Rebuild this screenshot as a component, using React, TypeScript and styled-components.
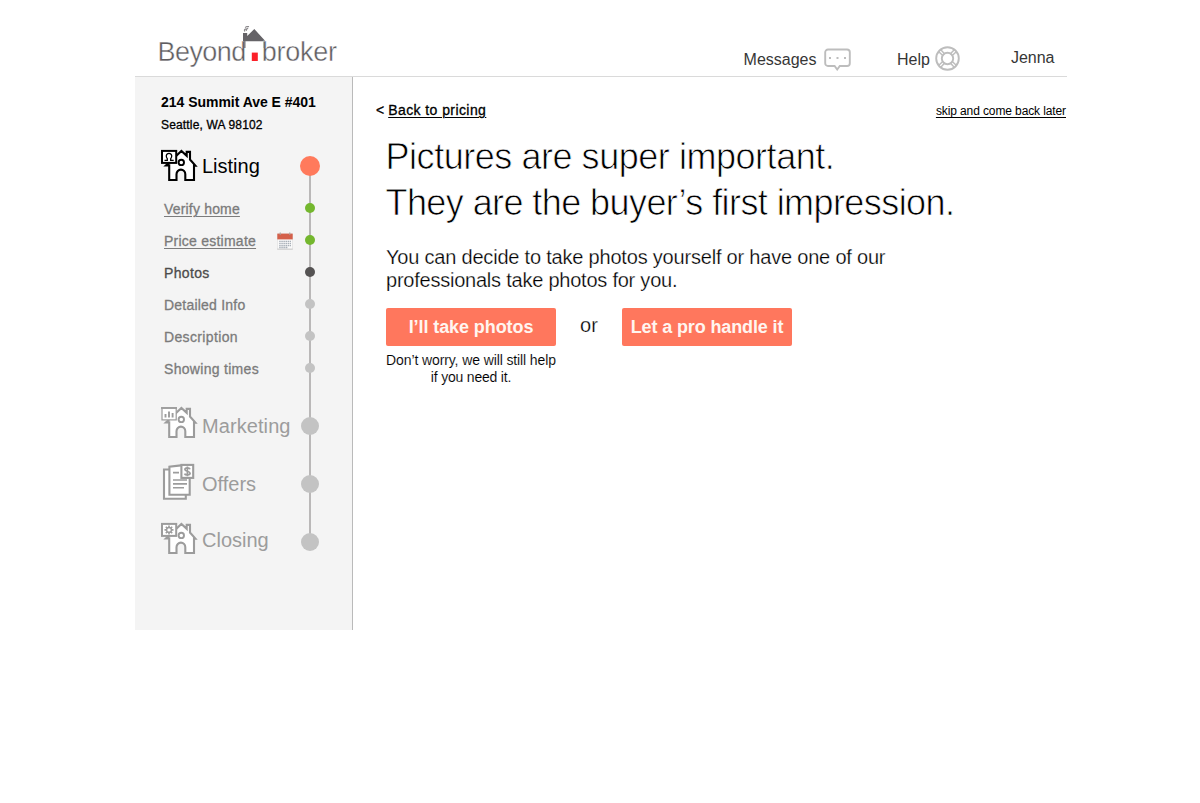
import React from "react";
import styled, { createGlobalStyle } from "styled-components";

const GlobalStyle = createGlobalStyle`
  body {
    margin: 0;
    background: #fff;
    color: #000;
    font-family: "Liberation Sans", Arial, Helvetica, sans-serif;
  }
  svg { display: block; flex: none; }
`;

const Page = styled.div`
  width: 932px;
  margin-left: 135px;
`;

const Header = styled.header`
  display: flex;
  align-items: flex-start;
  height: 76px;
  border-bottom: 1px solid #dadada;
`;

const Logo = styled.a`
  display: flex;
  align-items: flex-start;
  padding: 26px 0 0 22.5px;
  width: 180px;
  color: #5f5d61;
`;

const LogoWord = styled.span<{ $width: number; $spacing: number }>`
  width: ${(p) => p.$width}px;
  margin-top: 11px;
  font-size: 27px;
  line-height: 31px;
  letter-spacing: ${(p) => p.$spacing}px;
  white-space: nowrap;
  -webkit-text-stroke: 0.4px #fff;
`;

const LogoMark = styled.svg`
  margin: 0 -5px 0 -3px;
`;

const HeaderNav = styled.nav`
  display: flex;
  align-items: flex-start;
  margin-left: auto;
  padding-right: 12.5px;
`;

const HeaderLink = styled.a<{ $top: number; $gap?: number }>`
  display: flex;
  align-items: flex-start;
  gap: ${(p) => p.$gap ?? 0}px;
  padding-top: ${(p) => p.$top}px;
  font-size: 16px;
  line-height: 18px;
  color: #363636;
  white-space: nowrap;
  & + & { margin-left: 46.5px; }
  &:last-child { margin-left: 51px; }
`;

const HeaderIcon = styled.svg<{ $lift: number }>`
  margin-top: -${(p) => p.$lift}px;
  fill: none;
  stroke: #bdbdbd;
  stroke-width: 1.9;
`;

const Body = styled.div`
  display: flex;
`;

const Sidebar = styled.aside`
  box-sizing: border-box;
  width: 218px;
  height: 553px;
  padding: 16px 0 0 26px;
  background: #f4f4f4;
  border-right: 1px solid #bababa;
`;

const Street = styled.div`
  font-size: 14px;
  font-weight: 700;
  line-height: 18px;
  letter-spacing: -0.03px;
  white-space: nowrap;
`;

const City = styled.div`
  margin-top: 6px;
  font-size: 12px;
  line-height: 16px;
  letter-spacing: 0.16px;
  -webkit-text-stroke: 0.3px #000;
`;

const Steps = styled.nav`
  position: relative;
  margin-top: 7px;
  &::before {
    content: "";
    position: absolute;
    left: 148px;
    top: 26px;
    bottom: 29px;
    width: 2px;
    background: #bab8b8;
  }
`;

const Stage = styled.div<{ $height: number; $active?: boolean }>`
  display: grid;
  grid-template-columns: 139px 20px;
  align-items: center;
  height: ${(p) => p.$height}px;
  color: ${(p) => (p.$active ? "#000" : "#9c9c9c")};
`;

const StageName = styled.div<{ $shift: number }>`
  display: flex;
  align-items: center;
  height: 44px;
  margin-top: ${(p) => p.$shift * 2}px;
  margin-left: -5px;
`;

const StageText = styled.span<{ $spacing: number; $drop: number }>`
  margin-left: -1px;
  padding-top: ${(p) => p.$drop}px;
  font-size: 20px;
  line-height: 24px;
  letter-spacing: ${(p) => p.$spacing}px;
  white-space: nowrap;
`;

const SubSteps = styled.div`
  margin-bottom: 13px;
`;

const SubStep = styled.div`
  display: grid;
  grid-template-columns: 139px 20px;
  align-items: center;
  height: 32px;
`;

const SubName = styled.div`
  display: flex;
  align-items: center;
  justify-content: space-between;
  height: 20px;
  padding: 2px 7.5px 0 3px;
`;

const SubText = styled.a<{ $current?: boolean; $done?: boolean; $spacing: number }>`
  font-size: 14px;
  line-height: 16px;
  letter-spacing: ${(p) => p.$spacing}px;
  white-space: nowrap;
  color: ${(p) => (p.$current ? "#4c4c4c" : "#7b7b7b")};
  -webkit-text-stroke: 0.3px currentColor;
  text-decoration: ${(p) => (p.$done ? "underline" : "none")};
  text-decoration-thickness: 1px;
  text-underline-offset: 2px;
`;

const Dot = styled.span<{ $size: number; $color: string }>`
  position: relative;
  justify-self: center;
  width: ${(p) => p.$size}px;
  height: ${(p) => p.$size}px;
  border-radius: 50%;
  background: ${(p) => p.$color};
`;

const Main = styled.main`
  flex: 1;
  padding: 23px 1px 0 33px;
`;

const TopLinks = styled.div`
  display: flex;
  justify-content: space-between;
  margin-left: -10px;
  line-height: 20px;
`;

const Back = styled.div`
  display: flex;
  gap: 4px;
  font-size: 14px;
  -webkit-text-stroke: 0.3px #000;
`;

const Link = styled.a<{ $light?: boolean }>`
  font-size: ${(p) => (p.$light ? 12 : 14)}px;
  letter-spacing: ${(p) => (p.$light ? -0.11 : 0.42)}px;
  padding-top: ${(p) => (p.$light ? 1 : 0)}px;
  text-decoration: underline;
  text-decoration-thickness: 1px;
  text-underline-offset: 2px;
  text-decoration-skip-ink: ${(p) => (p.$light ? "none" : "auto")};
`;

const Heading = styled.h1`
  margin: 13px 0 0 -0.5px;
  font-size: 36px;
  font-weight: 400;
  line-height: 45.5px;
  -webkit-text-stroke: 0.75px #fff;
`;

const Line = styled.span<{ $spacing: number }>`
  display: block;
  letter-spacing: ${(p) => p.$spacing}px;
  white-space: nowrap;
`;

const Lead = styled.p`
  margin: 21px 0 0;
  font-size: 20px;
  line-height: 23px;
  -webkit-text-stroke: 0.25px #fff;
`;

const Choices = styled.div`
  display: flex;
  align-items: flex-start;
  margin-top: 16px;
`;

const Choice = styled.div`
  width: 170px;
`;

const Button = styled.button<{ $spacing: number }>`
  display: block;
  width: 170px;
  height: 38px;
  padding: 0;
  border: 0;
  border-radius: 2px;
  background: #ff775d;
  color: #fff5f0;
  font: 700 18px/38px "Liberation Sans", Arial, sans-serif;
  letter-spacing: ${(p) => p.$spacing}px;
  white-space: nowrap;
`;

const Or = styled.span`
  width: 66px;
  padding-top: 6px;
  text-align: center;
  font-size: 20px;
  line-height: 23px;
  -webkit-text-stroke: 0.25px #fff;
`;

const Note = styled.p`
  margin: 6px 0 0;
  text-align: center;
  font-size: 14px;
  line-height: 17px;
  -webkit-text-stroke: 0.1px #fff;
`;

function LogoHouse() {
  return (
    <LogoMark width="24" height="36" viewBox="0 0 24 36">
      <path d="M0 7H4.2V10L11.3 3L22.5 15.3H0Z" fill="#656367" />
      <path d="M1.8 15V22M21 15V22" stroke="#77757a" strokeWidth="1.4" />
      <path d="M1.8 5.5C.8 3.600 2.300 2.800 3.200 2.800M3.400 4.800C3 2.800 4.500 2.700 5 1.800M2.200 1.600C3.200.4 4.800.4 6 .7" fill="none" stroke="#8b898c" strokeWidth="1.200" />
      <rect x="8.8" y="26.600" width="6" height="8.400" fill="#fb2029" />
    </LogoMark>
  );
}

function House({ sign, thin }: { sign: React.ReactNode; thin?: boolean }) {
  return (
    <svg width="47" height="44" viewBox="0 0 47 44" fill="none" stroke="currentColor" strokeWidth="2.1">
      <path
        d="M10 22.4H13.2V37H20.500V31.200a4.400 4.600 0 0 1 8.800 0V37H38V22.600H39.400L34 16.500V8.900H30.700V12.800L25.400 7.900L18 15Z"
        fill="#fff"
      />
      <circle cx="25.300" cy="19.400" r="2.700" fill="#fff" strokeWidth="1.900" />
      <rect x="6" y="7.900" width="14.200" height="12" fill="#fff" strokeWidth={thin ? 1.2 : 2} />
      {sign}
    </svg>
  );
}

const PersonSign = (
  <path d="M8.500 17.300H11.300V15.800C9.700 14.300 9.800 10.300 13 10.300C16.200 10.300 16.300 14.300 14.700 15.800V17.300H17.700" strokeWidth="1.300" />
);

const ChartSign = (
  <>
    <path d="M5 8H21" strokeWidth="1.8" />
    <path d="M9.500 17.500V14M13 17.500V11.500M16.600 17.500V13" strokeWidth="1.900" />
  </>
);

const GearSign = (
  <>
    <circle cx="13" cy="13.900" r="2.400" strokeWidth="1.400" />
    <path d="M13 9.400V11.400M13 16.400V18.400M8.500 13.900H10.500M15.500 13.900H17.500M9.800 10.700L11.200 12.100M14.800 15.700L16.200 17.100M16.200 10.700L14.800 12.100M11.200 15.700L9.800 17.100" strokeWidth="1.600" />
  </>
);

function OfferSheets() {
  return (
    <svg width="47" height="44" viewBox="0 0 47 44" fill="none" stroke="currentColor" strokeWidth="2.1">
      <path d="M14 9.500H8V38.800H29.800V35" fill="#fff" />
      <path d="M25 5.400L13.400 6.600V34.800H33.700V18" fill="#fff" />
      <path d="M17 12.600H23M17 20H31M17 23.900H31M17 27.800H28" strokeWidth="1.600" />
      <rect x="25.400" y="4.900" width="11.800" height="13" fill="#fff" />
      <path d="M34.100 9.200C33.400 7.500 28.900 7.300 28.900 9.500C29 11.700 34 10.800 34.100 13.300C34.100 15.500 29.200 15.400 28.500 13.600M31.400 6.500V16.300" strokeWidth="1.700" />
    </svg>
  );
}

function Calendar() {
  return (
    <svg width="16" height="18" viewBox="0 0 16 18">
      <rect x=".5" y="2" width="15" height="15.600" rx=".6" fill="#fafafa" stroke="#d9d9d9" strokeWidth=".5" />
      <rect x=".3" y="16.600" width="15.400" height="1" fill="#c9c9c9" />
      <rect x=".3" y="1.600" width="15.400" height="5.800" fill="#d4604a" />
      <path d="M3.200.4V3M12.800.4V3" stroke="#a9a39f" strokeWidth="1" />
      <path d="M2.200 9.400H14M2.200 11.500H14M2.200 13.600H14M2.200 15.500H11" stroke="#a9b0b8" strokeWidth="1.300" strokeDasharray="1.500 .6" />
    </svg>
  );
}

const subSteps = [
  { name: "Verify home", color: "#74b72e", done: true, spacing: 0.18 },
  { name: "Price estimate", color: "#74b72e", done: true, spacing: 0.24, calendar: true },
  { name: "Photos", color: "#555353", current: true, spacing: 0.35 },
  { name: "Detailed Info", color: "#c3c3c3", spacing: 0.22 },
  { name: "Description", color: "#c3c3c3", spacing: 0.36 },
  { name: "Showing times", color: "#c3c3c3", spacing: 0.3 },
];

const laterStages = [
  { name: "Marketing", icon: <House sign={ChartSign} thin />, shift: -4, drop: 8, spacing: 0.08 },
  { name: "Offers", icon: <OfferSheets />, shift: -2, drop: 4, spacing: 0 },
  { name: "Closing", icon: <House sign={GearSign} />, shift: -4, drop: 4, spacing: 0 },
];

export default function App() {
  return (
    <Page>
      <GlobalStyle />
      <Header>
        <Logo>
          <LogoWord $width={88.5} $spacing={-0.55}>Beyond</LogoWord>
          <LogoHouse />
          <LogoWord $width={76} $spacing={-0.25}>broker</LogoWord>
        </Logo>
        <HeaderNav>
          <HeaderLink $top={51} $gap={7}>
            Messages
            <HeaderIcon $lift={3} width="27" height="23" viewBox="0 0 27 23">
              <path d="M4 1.500H23a2.800 2.800 0 0 1 2.800 2.800V15.200a2.800 2.800 0 0 1-2.800 2.800H15.800L13.200 21.500L10.600 18H4A2.800 2.800 0 0 1 1.200 15.200V4.300A2.800 2.800 0 0 1 4 1.500Z" />
              <path d="M5 10H7M12.500 10H14.500M20 10H22" />
            </HeaderIcon>
          </HeaderLink>
          <HeaderLink $top={51} $gap={5}>
            Help
            <HeaderIcon $lift={5} width="25" height="25" viewBox="0 0 25 25">
              <circle cx="12.500" cy="12.500" r="11.300" />
              <circle cx="12.500" cy="12.500" r="5.700" />
              <path d="M3.500 5.500L7.500 9.300M5.500 3.500L9.300 7.500M19.500 3.500L15.700 7.500M21.500 5.500L17.500 9.300M3.500 19.500L7.500 15.700M5.500 21.500L9.300 17.500M19.500 21.500L15.700 17.500M21.500 19.500L17.500 15.700" strokeWidth="1.500" />
            </HeaderIcon>
          </HeaderLink>
          <HeaderLink $top={49}>Jenna</HeaderLink>
        </HeaderNav>
      </Header>
      <Body>
        <Sidebar>
          <Street>214 Summit Ave E #401</Street>
          <City>Seattle, WA 98102</City>
          <Steps>
            <Stage $height={52} $active>
              <StageName $shift={-1}>
                <House sign={PersonSign} />
                <StageText $spacing={0} $drop={2}>Listing</StageText>
              </StageName>
              <Dot $size={20} $color="#ff7a5c" />
            </Stage>
            <SubSteps>
              {subSteps.map((s) => (
                <SubStep key={s.name}>
                  <SubName>
                    <SubText $done={s.done} $current={s.current} $spacing={s.spacing}>{s.name}</SubText>
                    {s.calendar && <Calendar />}
                  </SubName>
                  <Dot $size={10} $color={s.color} />
                </SubStep>
              ))}
            </SubSteps>
            {laterStages.map((s) => (
              <Stage key={s.name} $height={58}>
                <StageName $shift={s.shift}>
                  {s.icon}
                  <StageText $spacing={s.spacing} $drop={s.drop}>{s.name}</StageText>
                </StageName>
                <Dot $size={18} $color="#c3c3c3" />
              </Stage>
            ))}
          </Steps>
        </Sidebar>
        <Main>
          <TopLinks>
            <Back>
              <span>&lt;</span>
              <Link>Back to pricing</Link>
            </Back>
            <Link $light>skip and come back later</Link>
          </TopLinks>
          <Heading>
            <Line $spacing={-0.46}>Pictures are super important.</Line>
            <Line $spacing={-0.58}>They are the buyer’s first impression.</Line>
          </Heading>
          <Lead>
            <Line $spacing={-0.2}>You can decide to take photos yourself or have one of our</Line>
            <Line $spacing={-0.23}>professionals take photos for you.</Line>
          </Lead>
          <Choices>
            <Choice>
              <Button $spacing={-0.08}>I’ll take photos</Button>
              <Note>
                <Line $spacing={-0.11}>Don’t worry, we will still help</Line>
                <Line $spacing={-0.2}>if you need it.</Line>
              </Note>
            </Choice>
            <Or>or</Or>
            <Button $spacing={-0.13}>Let a pro handle it</Button>
          </Choices>
        </Main>
      </Body>
    </Page>
  );
}
